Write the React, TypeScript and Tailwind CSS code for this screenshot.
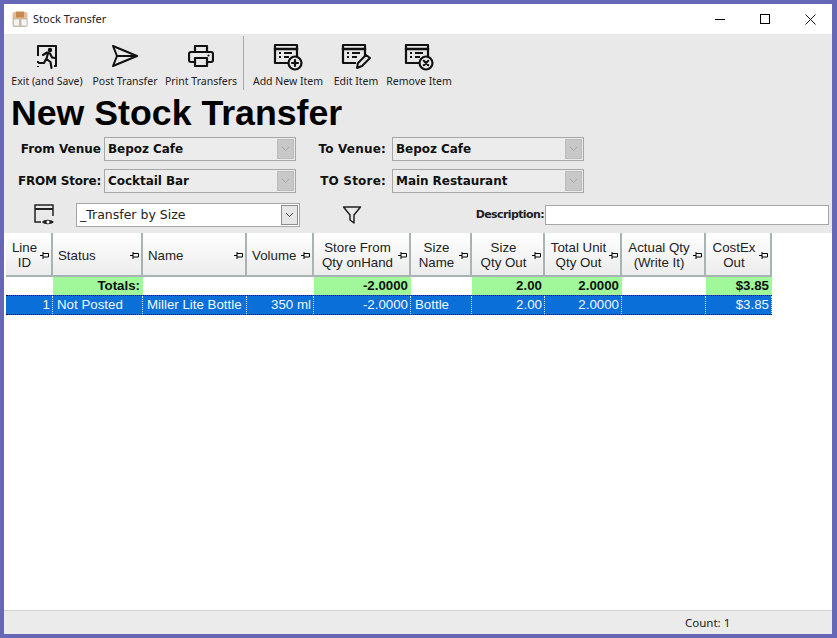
import React from "react";

const ui = "font-['Noto_Sans',sans-serif]";
const tah = "font-['DejaVu_Sans',sans-serif]";
const ari = "font-['Liberation_Sans',sans-serif]";

const S = { fill: "none", stroke: "#111", strokeWidth: 2.2, strokeLinejoin: "round" as const, strokeLinecap: "round" as const };

function ExitIcon() {
  return (
    <svg width="22" height="25" viewBox="0 0 22 25">
      <path d="M2 12V2h18v20h-2" {...S} strokeWidth={2} strokeLinecap="butt" />
      <path d="M2 17v2M2 22v1" {...S} strokeWidth={2} strokeLinecap="butt" />
      <circle cx="14" cy="6" r="2.200" fill="#111" />
      <path d="M7 11l4-2.500 3 1 2 4 3 .5M12 9l-1.500 6 4 3 1 6M10 15l-2 4-5 0" {...S} strokeWidth={2.100} />
    </svg>
  );
}
function SendIcon() {
  return (
    <svg width="28" height="24" viewBox="0 0 28 24">
      <path d="M2 2l24 10L2 22l4-10z" {...S} strokeWidth={2} />
      <path d="M6 12h20" {...S} strokeWidth={2} />
    </svg>
  );
}
function PrintIcon() {
  return (
    <svg width="26" height="24" viewBox="0 0 26 24">
      <path d="M7 8V2h12v6" {...S} />
      <path d="M6 18H3a2 2 0 0 1-2-2v-6a2 2 0 0 1 2-2h20a2 2 0 0 1 2 2v6a2 2 0 0 1-2 2h-3" {...S} />
      <path d="M7 14h12v8H7z" {...S} />
      <circle cx="20.500" cy="11.500" r="1.100" fill="#111" />
    </svg>
  );
}
function ItemIcon({ kind }: { kind: "add" | "edit" | "remove" }) {
  return (
    <svg width="30" height="28" viewBox="0 0 30 28" className="mt-[2px]">
      <path d="M14 20H2V2h22v11" {...S} strokeLinecap="square" />
      <path d="M2 6h22" {...S} strokeWidth={2.600} />
      <path d="M6 10h2M11 10h8M6 14h2M11 14h5" {...S} strokeWidth={1.800} strokeLinecap="butt" />
      {kind === "add" && (
        <>
          <circle cx="22" cy="20" r="6.500" fill="#e9e9e9" {...S} />
          <path d="M22 17v6M19 20h6" {...S} />
        </>
      )}
      {kind === "remove" && (
        <>
          <circle cx="22" cy="20" r="6.500" fill="#e9e9e9" {...S} />
          <path d="M19.800 17.800l4.400 4.400M24.200 17.800l-4.400 4.400" {...S} />
        </>
      )}
      {kind === "edit" && (
        <path d="M16 25l1-5 8-8 4 3-8 8z" fill="#e9e9e9" {...S} strokeWidth={2} />
      )}
    </svg>
  );
}
function ViewIcon() {
  return (
    <svg width="24" height="24" viewBox="0 0 24 24">
      <path d="M8 19H2V2h18v11" fill="none" stroke="#222" strokeWidth="1.500" />
      <path d="M2 6h18" stroke="#222" strokeWidth="2" />
      <path d="M9 19c2-3 9-3 12 0c-3 3-10 3-12 0z" fill="#222" />
      <circle cx="15" cy="19" r="1.500" fill="#fff" />
    </svg>
  );
}
function FilterIcon() {
  return (
    <svg width="20" height="20" viewBox="0 0 20 20">
      <path d="M1.500 2h17l-6.500 8v8l-4-3v-5z" fill="none" stroke="#222" strokeWidth="1.500" strokeLinejoin="round" />
    </svg>
  );
}
function Pin() {
  return (
    <svg width="9" height="7" viewBox="0 0 9 7" className="shrink-0">
      <path d="M0 3.500h3M3 0v7M3 1.500h5.500v3.500h-5.500" fill="none" stroke="#000" strokeWidth="1" />
    </svg>
  );
}
function Chevron({ color }: { color: string }) {
  return (
    <svg width="9" height="6" viewBox="0 0 9 6">
      <path d="M1 1l3.500 3.500L8 1" fill="none" stroke={color} strokeWidth="1" />
    </svg>
  );
}

function Tool({ label, w, children }: { label: string; w: string; children: React.ReactNode }) {
  return (
    <div className={`flex flex-col items-center ${w}`}>
      <div className="h-[28px] flex items-center justify-center">{children}</div>
      <div className={`${ui} text-[10.500px] leading-[14px] mt-[4px] text-[#222] whitespace-nowrap`}>{label}</div>
    </div>
  );
}

function Combo({ value }: { value: string }) {
  return (
    <div className="w-[192px] h-[24px] border border-[#a6a6a6] bg-[#ececec] flex items-center justify-between pl-[3px] pr-[1px]">
      <span className={`${tah} text-[12px] font-bold text-[#111] tracking-[-0.05px]`}>{value}</span>
      <span className="w-[17px] h-[20px] bg-[#c8c8c8] border border-[#bdbdbd] flex items-center justify-center">
        <Chevron color="#a8a8a8" />
      </span>
    </div>
  );
}

const cols = [47, 90, 104, 67, 97, 61, 73, 77, 84, 66];
const headers = ["Line|ID", "Status", "Name", "Volume", "Store From|Qty onHand", "Size|Name", "Size|Qty Out", "Total Unit|Qty Out", "Actual Qty|(Write It)", "CostEx|Out"];
const totals: (string | null)[] = [null, "Totals:", null, null, "-2.0000", null, "2.00", "2.0000", null, "$3.85"];
const row: [string, "l" | "r"][] = [["1", "r"], ["Not Posted", "l"], ["Miller Lite Bottle", "l"], ["350 ml", "r"], ["-2.0000", "r"], ["Bottle", "l"], ["2.00", "r"], ["2.0000", "r"], ["", "r"], ["$3.85", "r"]];

export default function App() {
  return (
    <div className="w-[837px] h-[638px] bg-[#6767b7] pt-[4px] pl-[4px] pr-[5px] pb-[4px] overflow-hidden">
      <div className="h-full flex flex-col bg-white">
        {/* Title bar */}
        <div className="h-[30px] shrink-0 flex items-center bg-white">
          <svg width="16" height="17" viewBox="0 0 16 17" className="ml-[8px]">
            <rect x="0.500" y="1" width="15" height="15" rx="2" fill="#e3bd9b" />
            <rect x="4" y="0.500" width="8" height="6" fill="#c58a4f" />
            <rect x="1.500" y="8" width="6" height="7" fill="#f4f4f4" stroke="#8aa" strokeWidth="0.500" />
            <rect x="9" y="8" width="6" height="7" fill="#f4f4f4" stroke="#8aa" strokeWidth="0.500" />
          </svg>
          <span className={`${ui} text-[11px] ml-[5px] text-[#222]`}>Stock Transfer</span>
          <div className="ml-auto flex items-center">
            <div className="w-[45px] flex justify-center"><div className="w-[10px] h-px bg-black" /></div>
            <div className="w-[46px] flex justify-center"><div className="w-[10px] h-[10px] border border-black" /></div>
            <div className="w-[44px] flex justify-center">
              <svg width="11" height="11" viewBox="0 0 11 11"><path d="M.5.5l10 10M10.500.5l-10 10" stroke="#111" strokeWidth="1" /></svg>
            </div>
          </div>
        </div>

        {/* Gray panel */}
        <div className="h-[199px] shrink-0 bg-[#e9e9e9] flex flex-col">
          <div className="h-[58px] flex items-start pt-[8px]">
            <div className="flex ml-[5px]">
              <Tool label="Exit (and Save)" w="w-[76px]"><ExitIcon /></Tool>
              <Tool label="Post Transfer" w="w-[80px]"><SendIcon /></Tool>
              <Tool label="Print Transfers" w="w-[72px]"><PrintIcon /></Tool>
            </div>
            <div className="w-px h-[54px] bg-[#a9a9a9] ml-[6px] -mt-[6px]" />
            <div className="flex">
              <Tool label="Add New Item" w="w-[88px]"><ItemIcon kind="add" /></Tool>
              <Tool label="Edit Item" w="w-[48px]"><ItemIcon kind="edit" /></Tool>
              <Tool label="Remove Item" w="w-[78px]"><ItemIcon kind="remove" /></Tool>
            </div>
          </div>
          <div className={`${ari} font-bold text-[35.700px] leading-[38px] text-black ml-[7px] mt-[2px]`}>New Stock Transfer</div>
          <div className="flex items-center h-[24px] mt-[5px]">
            <div className={`${tah} text-[12px] font-bold text-[#111] w-[97px] text-right mr-[3px] whitespace-nowrap`}>From Venue</div>
            <Combo value="Bepoz Cafe" />
            <div className={`${tah} text-[12px] font-bold text-[#111] w-[90px] text-right mr-[6px] whitespace-nowrap tracking-[0.2px]`}>To Venue:</div>
            <Combo value="Bepoz Cafe" />
          </div>
          <div className="flex items-center h-[24px] mt-[8px]">
            <div className={`${tah} text-[12px] font-bold text-[#111] w-[97px] text-right mr-[3px] whitespace-nowrap tracking-[-0.2px]`}>FROM Store:</div>
            <Combo value="Cocktail Bar" />
            <div className={`${tah} text-[12px] font-bold text-[#111] w-[90px] text-right mr-[6px] whitespace-nowrap tracking-[0.2px]`}>TO Store:</div>
            <Combo value="Main Restaurant" />
          </div>
          <div className="flex items-center h-[24px] mt-[10px]">
            <div className="ml-[29px] w-[24px]"><ViewIcon /></div>
            <div className="ml-[19px] w-[224px] h-[24px] border border-[#a6a6a6] bg-white flex items-center justify-between pl-[3px] pr-[1px]">
              <span className={`${tah} text-[12.500px] text-[#222]`}>_Transfer by Size</span>
              <span className="w-[17px] h-[20px] bg-[#e6e6e6] border border-[#8c8c8c] flex items-center justify-center"><Chevron color="#444" /></span>
            </div>
            <div className="ml-[42px] w-[20px]"><FilterIcon /></div>
            <div className={`${tah} text-[11px] font-bold text-[#222] w-[182px] text-right mr-[1px] whitespace-nowrap tracking-[-0.6px]`}>Description:</div>
            <div className="w-[284px] h-[20px] border border-[#a6a6a6] bg-white" />
          </div>
        </div>

        {/* Grid */}
        <div className={`flex-1 bg-white ${ari} text-[13.300px] min-h-0 pl-[2px]`}>
          <div className="flex h-[44px]">
            {headers.map((h, i) => (
              <div
                key={i}
                style={{ width: cols[i] }}
                className={`shrink-0 flex items-center bg-gradient-to-b from-white to-[#ececec] border-r-2 border-b-2 border-[#a8b4b4] pr-[2px] pt-[2px] text-[#222] ${h.includes("|") ? "pl-[3px]" : "pl-[5px]"}`}
              >
                <div className={`flex-1 leading-[15px] whitespace-nowrap ${h.includes("|") ? "text-center" : ""}`}>
                  {h.split("|").map((t) => <div key={t}>{t}</div>)}
                </div>
                <Pin />
              </div>
            ))}
          </div>
          <div className="flex h-[18px]">
            {totals.map((t, i) => (
              <div
                key={i}
                style={{ width: cols[i] }}
                className={`shrink-0 text-right pr-[3px] leading-[18px] font-bold text-[#111] ${t ? "bg-[#a0f89a]" : "bg-white"}`}
              >
                {t}
              </div>
            ))}
          </div>
          <div className="flex h-[20px] border-y border-dotted border-black bg-[#0a6fd8]" style={{ width: 766 }}>
            {row.map(([t, a], i) => (
              <div
                key={i}
                style={{ width: cols[i] }}
                className={`shrink-0 leading-[18px] text-[#f2f8ff] border-r border-dotted border-[#cfe6ff] ${a === "r" ? "text-right pr-[2px]" : "text-left pl-[4px]"} whitespace-nowrap`}
              >
                {t}
              </div>
            ))}
          </div>
        </div>

        {/* Status bar */}
        <div className="h-[24px] shrink-0 border-t border-[#cfd3d3] bg-[#ebebeb] flex items-center">
          <span className={`${ui} text-[11.500px] text-[#222] ml-[681px]`}>Count: 1</span>
        </div>
      </div>
    </div>
  );
}
